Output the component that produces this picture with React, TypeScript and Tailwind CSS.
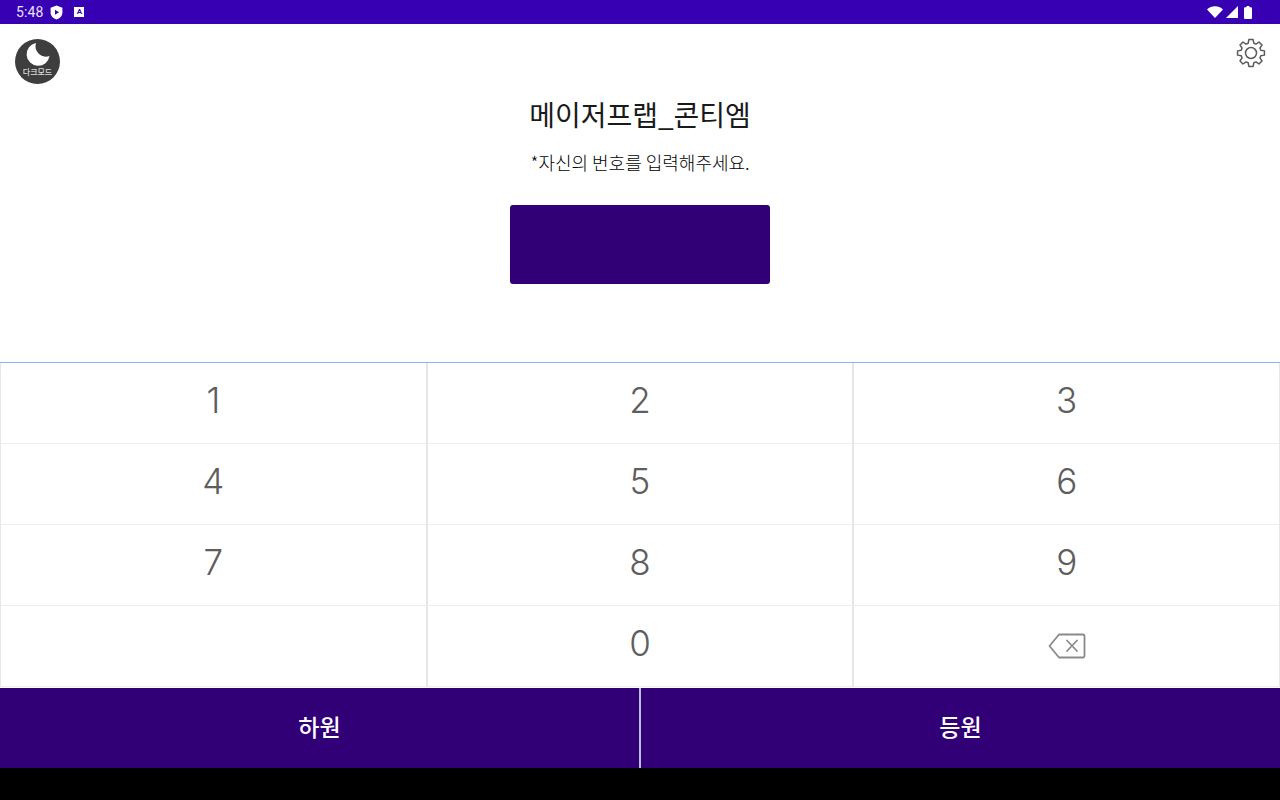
const FONT = "font-['Noto_Sans_CJK_KR','Noto_Sans',sans-serif]";

const KEYS = ["1", "2", "3", "4", "5", "6", "7", "8", "9", "", "0", "back"];

// 8 toothed outline for the settings gear
const gearPath = () => {
  const pt = (deg: number, r: number) => {
    const a = ((deg - 90) * Math.PI) / 180;
    return `${(16 + r * Math.cos(a)).toFixed(2)} ${(16 + r * Math.sin(a)).toFixed(2)}`;
  };
  let d = "";
  for (let i = 0; i < 8; i++) {
    const t = i * 45;
    d += `${i === 0 ? "M" : "L"}${pt(t - 9, 13.6)} L${pt(t + 9, 13.6)} L${pt(t + 16, 10.2)} L${pt(t + 29, 10.2)} `;
  }
  return d + "Z";
};

const StatusBar = () => {
  return (
    <div className="flex h-6 items-center justify-between bg-[#3700b3] pl-4 pr-[28px] text-white">
      <div className="flex items-center">
        <span className="font-['Roboto',sans-serif] text-[14px] leading-none tracking-[0.1px] text-[#e8e0f8]">
          5:48
        </span>
        <svg width="13" height="15" viewBox="0 0 12 14" className="ml-[7px]">
          <path d="M6 0.5 L11.5 2.5 V7 C11.5 10.3 9 12.6 6 13.5 C3 12.6 0.5 10.3 0.5 7 V2.5 Z" fill="#fff" />
          <path d="M4.6 4.4 L8.4 6.8 L4.6 9.2 Z" fill="#3700b3" />
        </svg>
        <div className="ml-[11px] flex h-[10px] w-[10px] items-center justify-center bg-white">
          <span className="font-['Roboto',sans-serif] text-[8px] font-bold leading-none text-[#3700b3]">A</span>
        </div>
      </div>
      <div className="flex items-center">
        <svg width="16" height="12" viewBox="0 0 16 12">
          <path d="M0 3.4 C4.4 -0.8 11.6 -0.8 16 3.4 L8 12 Z" fill="#fff" />
        </svg>
        <svg width="12" height="12" viewBox="0 0 12 12" className="ml-[3px]">
          <path d="M12 0 V12 H0 Z" fill="#fff" />
        </svg>
        <svg width="8" height="13" viewBox="0 0 8 13" className="ml-[6px]">
          <path d="M2.5 0 H5.5 V1.2 H7 A1 1 0 0 1 8 2.2 V12 A1 1 0 0 1 7 13 H1 A1 1 0 0 1 0 12 V2.2 A1 1 0 0 1 1 1.2 H2.5 Z" fill="#fff" />
        </svg>
      </div>
    </div>
  );
};

const DarkModeBadge = () => {
  return (
    <div className="mt-[15px] ml-[15px] flex h-[45px] w-[45px] flex-col items-center rounded-full bg-[#3e3e3e]">
      <svg width="26" height="26" viewBox="0 0 26 26" className="mt-[2px]">
        <path d="M11 2 A11.5 11.5 0 1 0 24.5 15 A10.5 10.5 0 0 1 11 2 Z" fill="#fff" />
      </svg>
      <span className={`${FONT} mt-[1px] text-[8px] font-medium leading-none text-[#dcdcdc]`}>다크모드</span>
    </div>
  );
};

const Gear = () => {
  return (
    <svg width="32" height="32" viewBox="0 0 32 32" fill="none" stroke="#5a5a5a" strokeWidth="1.5" strokeLinejoin="round" className="mt-[13px] mr-[13px]">
      <path d={gearPath()} />
      <circle cx="16" cy="16" r="5.5" />
    </svg>
  );
};

const Backspace = () => {
  return (
    <svg width="38" height="26" viewBox="0 0 38 26" fill="none" stroke="#8a8a8a" strokeWidth="1.8" strokeLinejoin="round" className="mt-[5px]">
      <path d="M11 1.5 H35 A1.5 1.5 0 0 1 36.5 3 V23 A1.5 1.5 0 0 1 35 24.5 H11 L1.5 13 Z" />
      <path d="M19 7.5 L29 18 M29 7.5 L19 18" strokeLinecap="round" />
    </svg>
  );
};

const App = () => {
  return (
    <div className={`${FONT} flex h-[800px] w-[1280px] flex-col overflow-hidden bg-black`}>
      <StatusBar />

      <div className="grid h-[338px] grid-cols-[1fr_auto_1fr] bg-white">
        <div>
          <DarkModeBadge />
        </div>
        <div className="flex flex-col items-center">
          <h1 className="mt-[72px] text-[28px] font-normal leading-[36px] text-[#1a1a1a]">메이저프랩_콘티엠</h1>
          <p className="mt-[18px] text-[18px] font-light leading-[24px] text-black">*자신의 번호를 입력해주세요.</p>
          <div className="mt-[31px] h-[79px] w-[260px] rounded-[3px] bg-[#310077]" />
        </div>
        <div className="flex justify-end">
          <Gear />
        </div>
      </div>

      <div className="grid h-[326px] grid-cols-3 grid-rows-[repeat(4,81px)] border-t border-[#8ab4f8] bg-white">
        {KEYS.map((key, i) => (
          <div
            key={i}
            className="flex items-center justify-center border-x border-b border-x-[#e6e6e6] border-b-[#eeeeee] pb-[5px] font-['Inter',sans-serif] text-[35px] font-light text-[#5e5e5e]"
          >
            {key === "back" ? <Backspace /> : key}
          </div>
        ))}
      </div>

      <div className="flex h-20 bg-[#310077] text-[23px] font-medium text-white">
        <div className="flex flex-1 items-center justify-center pb-[4px]">하원</div>
        <div className="w-[2px] bg-[#bcc0dc]" />
        <div className="flex flex-1 items-center justify-center pb-[4px]">등원</div>
      </div>
    </div>
  );
};

export default App;
